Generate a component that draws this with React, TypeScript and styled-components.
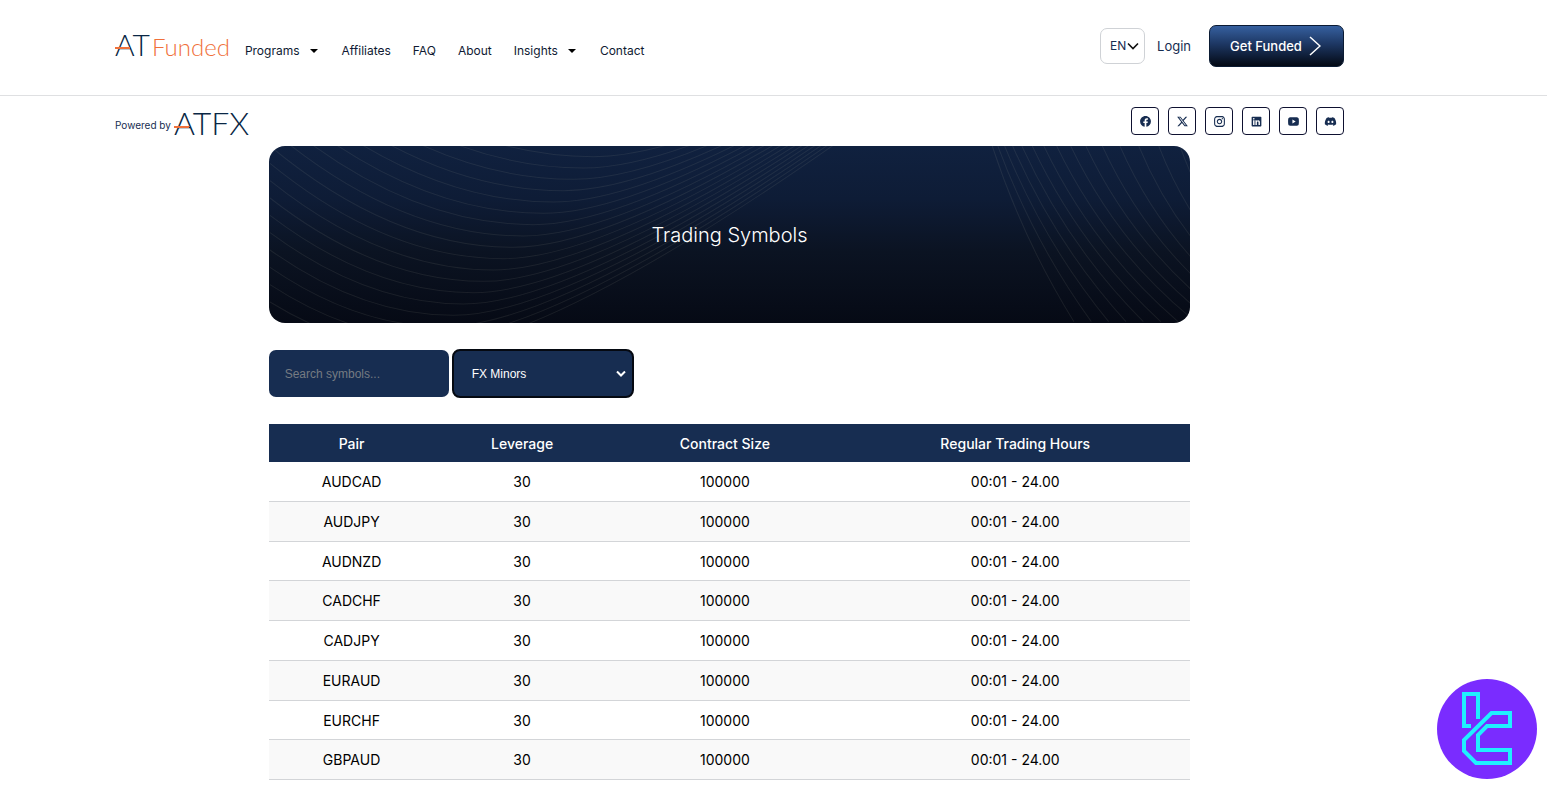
import React, { useState } from "react";
import styled, { createGlobalStyle } from "styled-components";
import {
  RiFacebookCircleFill,
  RiTwitterXFill,
  RiInstagramLine,
  RiLinkedinBoxFill,
  RiYoutubeFill,
  RiDiscordFill,
} from "react-icons/ri";

const navy = "#172d51";
const ink = "#0f1a33";
const orange = "#f0703a";

const GlobalStyle = createGlobalStyle`
  *, *::before, *::after { box-sizing: border-box; }
  body {
    margin: 0;
    background: #fff;
    color: #000;
    font-family: Inter, "Liberation Sans", sans-serif;
  }
`;

const Header = styled.header`
  border-bottom: 1px solid #dfe0e2;
`;

const Bar = styled.div`
  display: flex;
  align-items: center;
  padding: 0 203px 0 115px;
`;

const TopBar = styled(Bar)`
  padding-top: 25px;
  padding-bottom: 28px;
`;

const SubBar = styled(Bar)`
  justify-content: space-between;
  padding-top: 11px;
  padding-bottom: 11px;
`;

const Brand = styled.a`
  display: flex;
  align-items: baseline;
  gap: 2px;
  padding-bottom: 4px;
  color: #0a2745;
  font-family: Lato, sans-serif;
  font-weight: 300;
  text-decoration: none;
`;

const Letters = styled.span<{ $size: number }>`
  position: relative;
  font-size: ${(p) => p.$size}px;
  line-height: 32px;
  &::after {
    content: "";
    position: absolute;
    left: 0;
    top: 19px;
    width: 15px;
    height: 2px;
    background: ${orange};
  }
`;

const Funded = styled.span`
  color: ${orange};
  font-size: 24px;
`;

const Nav = styled.nav`
  display: flex;
  gap: 22px;
  padding: 10px 0 0 15px;
`;

const NavLink = styled.a`
  display: flex;
  align-items: center;
  gap: 10px;
  color: ${ink};
  font-size: 12px;
  line-height: 16px;
  text-decoration: none;
`;

const Caret = styled.span`
  border: 4px solid transparent;
  border-top-color: #000;
  border-bottom: 0;
  margin-right: 2px;
`;

const Actions = styled.div`
  display: flex;
  align-items: center;
  margin-left: auto;
`;

const SelectWrap = styled.label`
  position: relative;
  display: flex;
`;

const Arrow = styled.svg<{ $right: number }>`
  position: absolute;
  right: ${(p) => p.$right}px;
  top: 50%;
  transform: translateY(-50%);
  pointer-events: none;
  fill: none;
  stroke: currentColor;
`;

const LanguageSelect = styled.select`
  appearance: none;
  width: 45px;
  height: 36px;
  padding: 0 0 2px 9px;
  border: 1px solid #cfd2d6;
  border-radius: 7px;
  background: #fff;
  color: ${navy};
  font: 12px Inter, sans-serif;
`;

const Login = styled.a`
  margin: 0 18px 0 12px;
  color: ${navy};
  font-size: 13px;
  text-decoration: none;
`;

const FundedButton = styled.button`
  display: flex;
  align-items: center;
  justify-content: center;
  gap: 7px;
  width: 135px;
  height: 42px;
  padding: 0 2px 0 0;
  border: 1px solid #0b1b33;
  border-radius: 7px;
  background: linear-gradient(#36609f, #1d3763 45%, #030914);
  color: #fff;
  font: 500 13px Inter, sans-serif;
`;

const Powered = styled.div`
  display: flex;
  align-items: center;
  gap: 3px;
  height: 28px;
  padding-top: 7px;
  color: ${navy};
  font-size: 10px;
`;

const Socials = styled.div`
  display: flex;
  gap: 9px;
`;

const Social = styled.a`
  display: grid;
  place-items: center;
  width: 28px;
  height: 28px;
  border: 1px solid #0e1130;
  border-radius: 4px;
  color: ${navy};
  font-size: 13px;
`;

const Content = styled.div`
  padding: 0 203px 0 115px;
`;

const Main = styled.main`
  width: 75%;
  margin: 0 auto;
`;

const Hero = styled.section`
  position: relative;
  overflow: hidden;
  padding: 75px 20px 74px;
  border-radius: 16px;
  background: linear-gradient(#10213f, #0e1c36 30%, #0b1322 60%, #060a15);
`;

const Waves = styled.svg`
  position: absolute;
  inset: 0;
  width: 100%;
  height: 100%;
  fill: none;
  stroke: #b9b6a8;
  stroke-opacity: 0.1;
  stroke-width: 3;
`;

const Title = styled.h1`
  position: relative;
  margin: 0;
  color: #fff;
  font-size: 20px;
  font-weight: 300;
  line-height: 28px;
  text-align: center;
`;

const Filters = styled.div`
  display: flex;
  align-items: center;
  gap: 3px;
  margin: 26px 0;
`;

const Search = styled.input`
  width: 180px;
  height: 47px;
  padding: 0 16px;
  border: 0;
  border-radius: 7px;
  background: ${navy};
  color: #fff;
  font: 12px "Liberation Sans", sans-serif;
  &::placeholder { color: #757b82; }
`;

const GroupSelect = styled.select`
  appearance: none;
  width: 182px;
  height: 49px;
  padding: 0 18px;
  border: 2px solid #050911;
  border-radius: 8px;
  background: ${navy};
  color: #fff;
  font: 12px "Liberation Sans", sans-serif;
`;

const Table = styled.table`
  width: 100%;
  table-layout: fixed;
  border-collapse: collapse;
  font-size: 14px;
  text-align: center;
`;

const Th = styled.th<{ $width: number }>`
  width: ${(p) => p.$width}%;
  padding: 11px 10px 9px;
  background: ${navy};
  color: #fff;
  font-weight: 500;
  line-height: 18px;
`;

const Row = styled.tr`
  border-bottom: 1px solid #d3d5d8;
  &:nth-child(even) { background: #f9f9f9; }
`;

const Td = styled.td`
  padding: 11px 10px 9px;
  line-height: 1.34;
`;

const Badge = styled.a`
  position: fixed;
  right: 10px;
  bottom: 10px;
  width: 100px;
  height: 100px;
`;

const socials = [
  { name: "Facebook", Icon: RiFacebookCircleFill },
  { name: "X", Icon: RiTwitterXFill },
  { name: "Instagram", Icon: RiInstagramLine },
  { name: "LinkedIn", Icon: RiLinkedinBoxFill },
  { name: "YouTube", Icon: RiYoutubeFill },
  { name: "Discord", Icon: RiDiscordFill },
];

const links = [
  { text: "Programs", menu: true },
  { text: "Affiliates" },
  { text: "FAQ" },
  { text: "About" },
  { text: "Insights", menu: true },
  { text: "Contact" },
];

const columns = [
  { text: "Pair", width: 18 },
  { text: "Leverage", width: 19 },
  { text: "Contract Size", width: 25 },
  { text: "Regular Trading Hours", width: 38 },
];

const pairs = ["AUDCAD", "AUDJPY", "AUDNZD", "CADCHF", "CADJPY", "EURAUD", "EURCHF", "GBPAUD"];

// Bowl-shaped lines that gather towards the top right.
const leftWaves = Array.from({ length: 18 }, (_, k) => {
  const mx = 1000 - 30 * k;
  const my = 50 + 34 * k;
  return `M30 ${52 * k - 398}Q${(30 + mx) / 2} ${my} ${mx} ${my}Q${1300 - 25 * k} ${my} 1900 ${11 * k - 300}`;
});

// Lines that fan out from the top towards the right edge.
const rightWaves = Array.from({ length: 15 }, (_, j) => {
  const sx = 785 + 15 * j + 1.8 * j * j;
  const ex = 1030 + 52 * j;
  return `M${sx} 18Q${(sx + ex) / 2 - 30 - 4 * j} ${300 + 4 * j} ${ex} 545`;
});

export default function App() {
  const [query, setQuery] = useState("");
  const rows = pairs.filter((pair) => pair.includes(query.toUpperCase()));

  return (
    <>
      <GlobalStyle />
      <Header>
        <TopBar>
          <Brand href="#">
            <Letters $size={30}>AT</Letters>
            <Funded>Funded</Funded>
          </Brand>
          <Nav>
            {links.map((link) => (
              <NavLink href="#" key={link.text}>
                {link.text}
                {link.menu && <Caret />}
              </NavLink>
            ))}
          </Nav>
          <Actions>
            <SelectWrap>
              <LanguageSelect aria-label="Language">
                <option>EN</option>
              </LanguageSelect>
              <Arrow $right={6} width="12" height="8" viewBox="0 0 12 8" strokeWidth="1.6" color="#111">
                <path d="M1 1.5l5 5 5-5" />
              </Arrow>
            </SelectWrap>
            <Login href="#">Login</Login>
            <FundedButton type="button">
              Get Funded
              <svg width="12" height="20" viewBox="0 0 12 20" fill="none" stroke="#fff" strokeWidth="1.5">
                <path d="M1 1l10 9-10 9" />
              </svg>
            </FundedButton>
          </Actions>
        </TopBar>
      </Header>
      <SubBar>
        <Powered>
          Powered by
          <Brand href="#">
            <Letters $size={32}>ATFX</Letters>
          </Brand>
        </Powered>
        <Socials>
          {socials.map(({ name, Icon }) => (
            <Social href="#" aria-label={name} key={name}>
              <Icon />
            </Social>
          ))}
        </Socials>
      </SubBar>
      <Content>
        <Main>
          <Hero>
            <Waves viewBox="0 0 921 177" preserveAspectRatio="none" aria-hidden="true">
              <g transform="translate(-9 -6) scale(.3333)">
                {leftWaves.map((d) => (
                  <path d={d} key={d} />
                ))}
              </g>
              <g transform="translate(461 -6) scale(.3333)">
                {rightWaves.map((d) => (
                  <path d={d} key={d} />
                ))}
              </g>
            </Waves>
            <Title>Trading Symbols</Title>
          </Hero>
          <Filters>
            <Search
              type="text"
              aria-label="Search symbols"
              placeholder="Search symbols..."
              value={query}
              onChange={(e) => setQuery(e.target.value)}
            />
            <SelectWrap>
              <GroupSelect aria-label="Symbol group">
                <option>FX Minors</option>
              </GroupSelect>
              <Arrow $right={8} width="10" height="7" viewBox="0 0 10 7" strokeWidth="2" color="#fff">
                <path d="M1 1l4 4 4-4" />
              </Arrow>
            </SelectWrap>
          </Filters>
          <Table>
            <thead>
              <tr>
                {columns.map((c) => (
                  <Th scope="col" $width={c.width} key={c.text}>
                    {c.text}
                  </Th>
                ))}
              </tr>
            </thead>
            <tbody>
              {rows.map((pair) => (
                <Row key={pair}>
                  <Td>{pair}</Td>
                  <Td>30</Td>
                  <Td>100000</Td>
                  <Td>00:01 - 24.00</Td>
                </Row>
              ))}
            </tbody>
          </Table>
        </Main>
      </Content>
      <Badge href="#" aria-label="Support">
        <svg width="100" height="100" viewBox="0 0 100 100" fill="none" stroke="#1ff0ff" strokeWidth="4">
          <circle cx="50" cy="50" r="50" fill="#7a2cff" stroke="none" />
          <path d="M34 47H27V15H41V40" />
          <path d="M54.5 34H73V47H50L41 56V71H73V84H39L27 72V61Z" />
        </svg>
      </Badge>
    </>
  );
}
